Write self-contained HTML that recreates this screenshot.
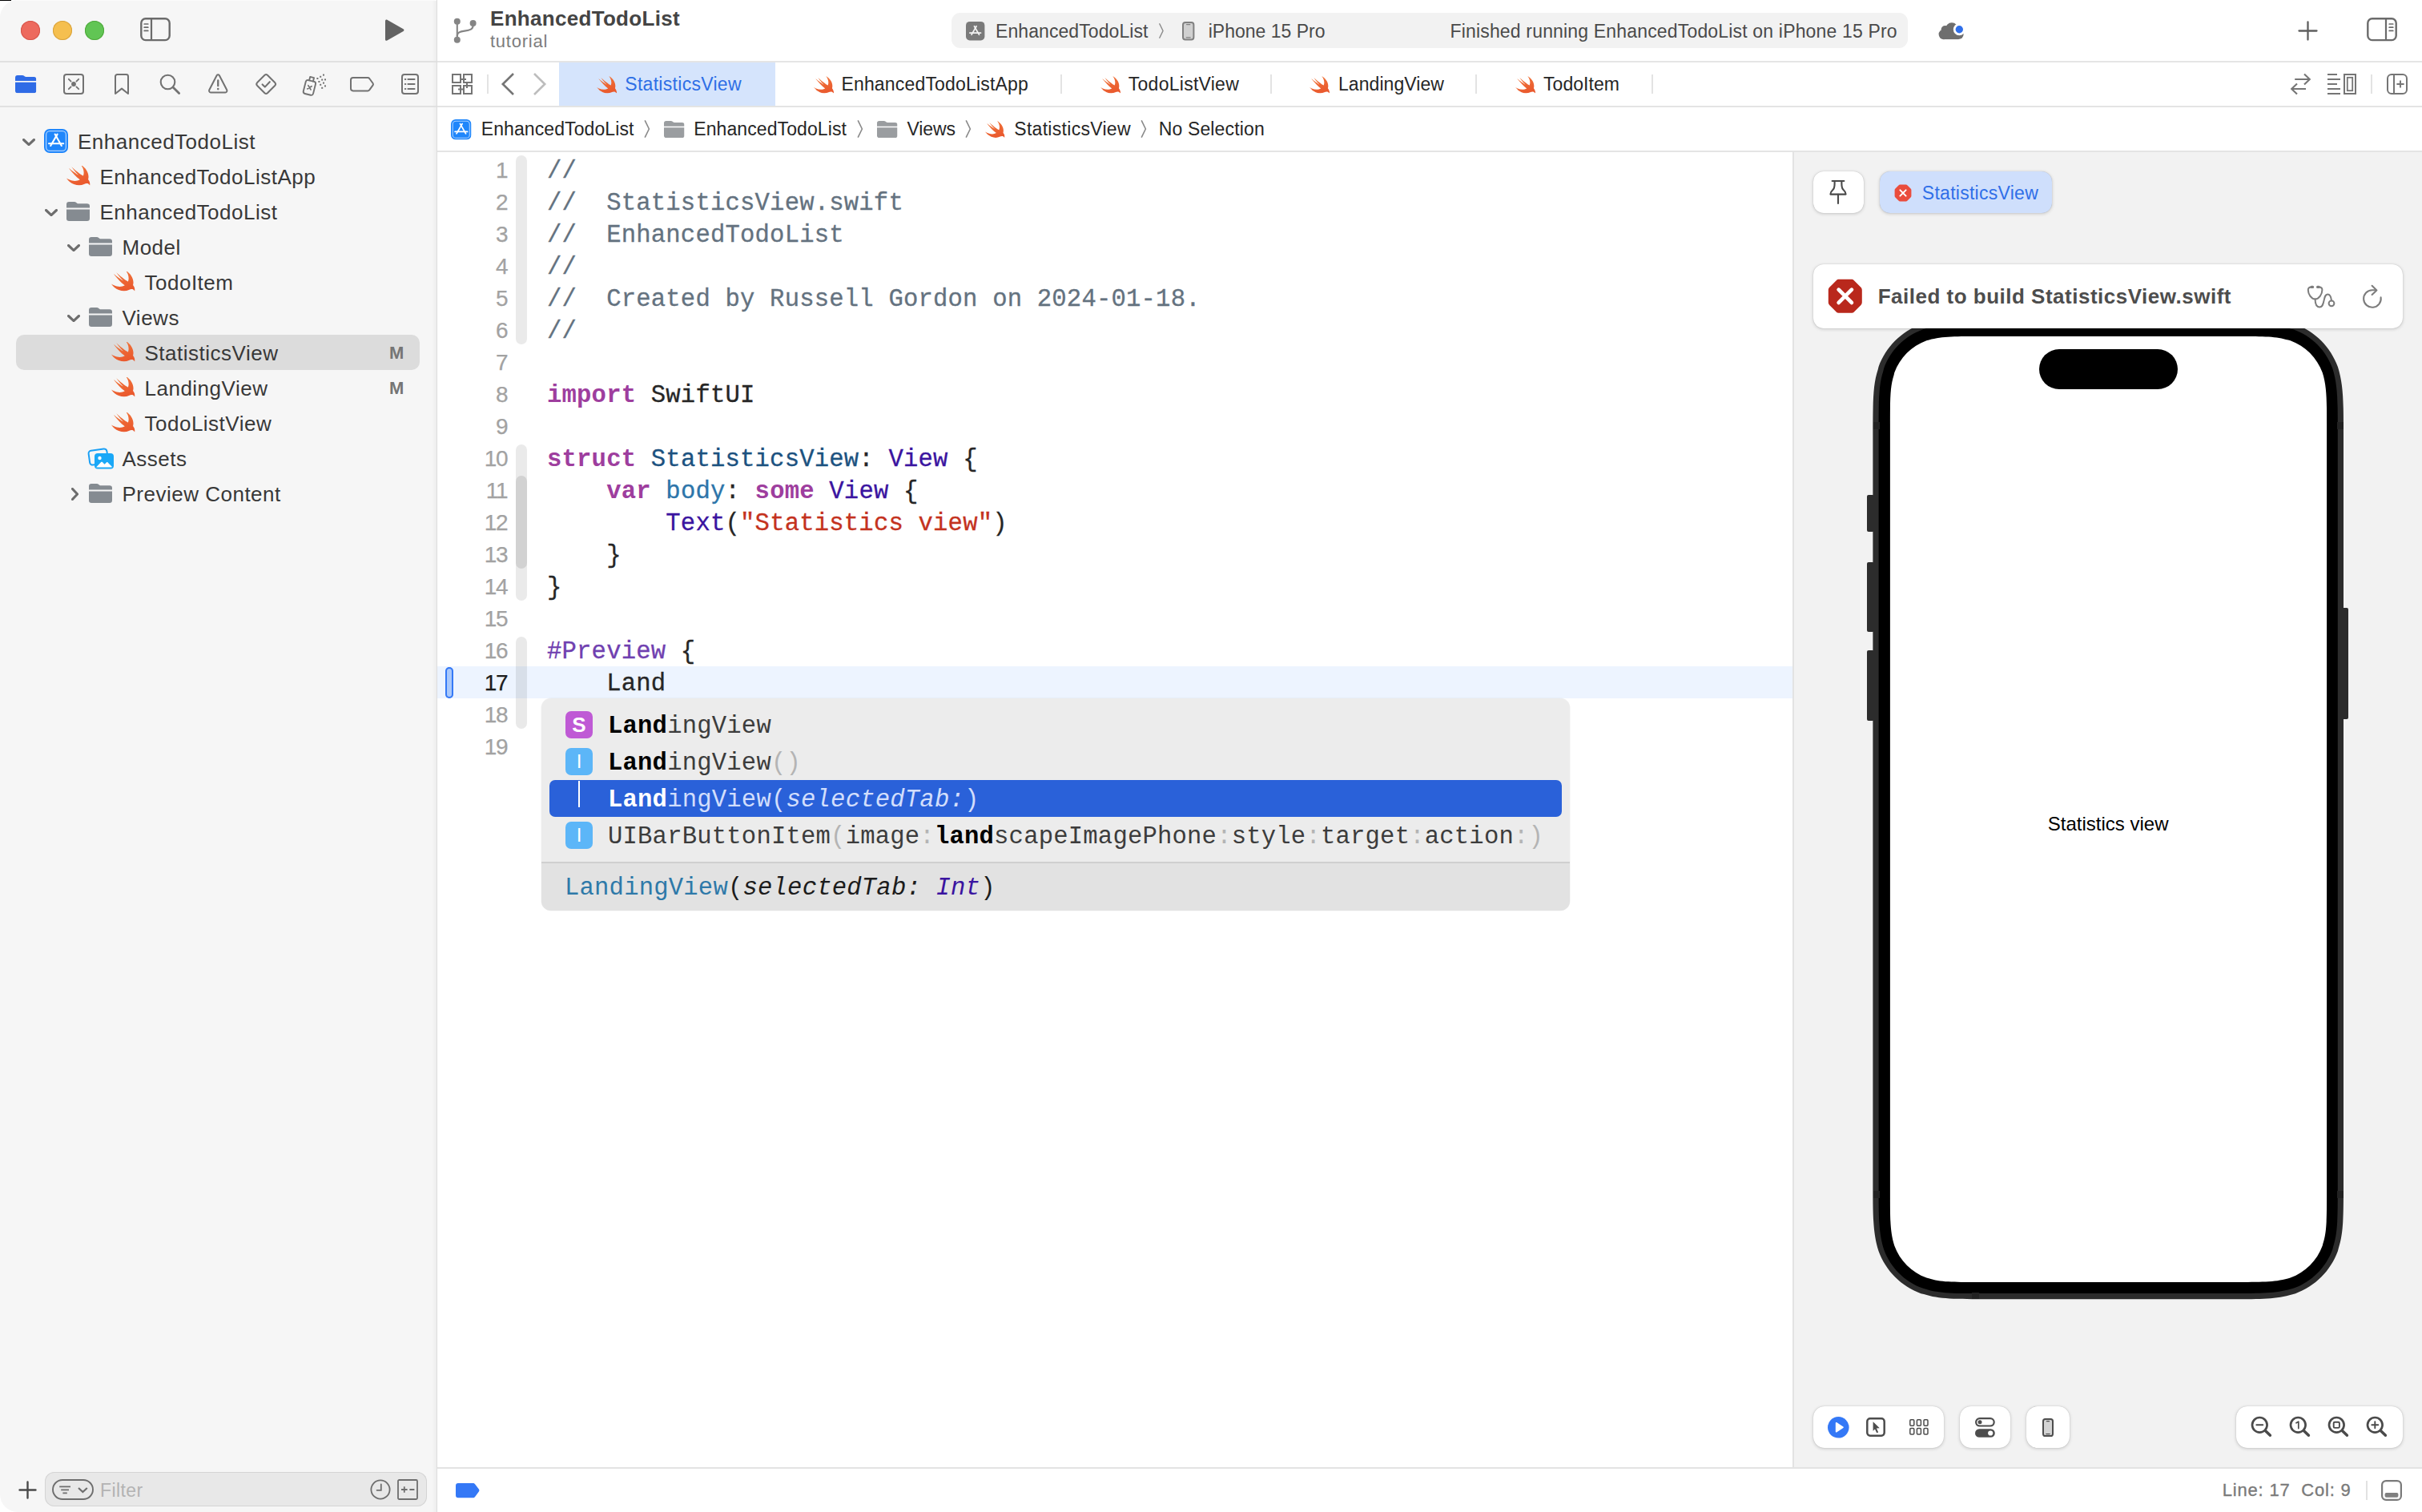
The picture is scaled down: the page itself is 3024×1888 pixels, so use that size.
<!DOCTYPE html>
<html>
<head>
<meta charset="utf-8">
<title>Xcode</title>
<style>
html,body{margin:0;padding:0;}
body{width:3024px;height:1888px;overflow:hidden;background:#fff;position:relative;font-family:"Liberation Sans",sans-serif;color:#262626;}
.abs{position:absolute;}
svg{position:absolute;overflow:visible;}
.t{position:absolute;white-space:pre;line-height:1;}
/* sidebar */
#sidebar{left:0;top:0;width:545px;height:1888px;background:#f6f6f6;border-radius:22px 0 0 22px;}
#sideborder{left:545px;top:0;width:1px;height:1888px;background:#dddddd;}
.hline{position:absolute;height:2px;background:#e1e1e1;}
.nav{position:absolute;font-size:26px;letter-spacing:.5px;color:#383838;white-space:pre;line-height:30px;height:30px;}
.badge{position:absolute;font-size:22px;font-weight:700;color:#757575;line-height:30px;}
/* tabs */
.tab{position:absolute;font-size:23px;letter-spacing:.25px;color:#262626;white-space:pre;line-height:28px;}
.crumb{position:absolute;font-size:23px;letter-spacing:.2px;color:#262626;white-space:pre;line-height:28px;top:147px;}
.tabsep{position:absolute;top:93px;width:2px;height:24px;background:#e3e3e3;}
/* code */
.ln{position:absolute;right:2390.7px;font-size:28px;letter-spacing:-1.3px;color:#a2a2a2;-webkit-text-stroke:.25px;line-height:40px;height:40px;white-space:pre;}
.code{position:absolute;left:683px;-webkit-text-stroke:.3px;font-family:"Liberation Mono",monospace;font-size:30.6px;letter-spacing:.18px;line-height:40px;height:40px;white-space:pre;color:#262626;}
.cm{color:#64727f;}
.kw{color:#9e3e9e;font-weight:700;-webkit-text-stroke:0;}
.ty{color:#1c5280;}
.cl{color:#3a14a0;}
.pr{color:#2d75aa;}
.st{color:#c4321e;}
.mc{color:#7040b0;}
.rib{position:absolute;left:644px;width:14px;border-radius:7px;background:#eaeaea;}
/* popup */
.pop{position:absolute;font-family:"Liberation Mono",monospace;font-size:30.6px;letter-spacing:.18px;line-height:40px;white-space:pre;color:#3c3c3c;}
.pop b{color:#000;}
.pop .g{color:#b4b4b4;}
.kind{position:absolute;left:706px;width:34px;height:34px;border-radius:7px;color:#fff;font-size:26px;font-weight:700;text-align:center;line-height:34px;}
.card{position:absolute;background:#fff;border-radius:11px;box-shadow:0 1px 4px rgba(0,0,0,.18),0 0 1px rgba(0,0,0,.25);}
</style>
</head>
<body>
<svg width="0" height="0" style="position:absolute">
<defs>
<linearGradient id="swg" x1="0" y1="0" x2="0.4" y2="1"><stop offset="0" stop-color="#f27a3c"/><stop offset="1" stop-color="#ea5a2e"/></linearGradient>
<symbol id="swift" viewBox="2.41 3.41 18.12 16.21" preserveAspectRatio="none"><path fill="url(#swg)" d="M13.543 3.41c4.114 2.47 6.545 7.162 5.549 11.131-.024.093-.05.181-.076.272l.002.001c2.062 2.538 1.5 5.258 1.236 4.745-1.072-2.086-3.066-1.568-4.088-1.043a6.803 6.803 0 0 1-.281.158l-.02.012-.002.002c-2.115 1.123-4.957 1.205-7.812-.022a12.568 12.568 0 0 1-5.64-4.838c.649.48 1.35.902 2.097 1.252 3.019 1.414 6.051 1.311 8.197-.002C9.651 12.73 7.101 9.67 5.146 7.191a10.628 10.628 0 0 1-1.005-1.384c2.34 2.142 6.038 4.83 7.365 5.576C8.69 8.408 6.208 4.743 6.324 4.86c4.436 4.47 8.528 6.996 8.528 6.996.154.085.27.154.36.213.085-.215.16-.437.224-.668.708-2.588-.09-5.548-1.893-7.992z"/></symbol>
<symbol id="folder" viewBox="0 0 29 24" preserveAspectRatio="none"><path d="M0 3.2A3.2 3.2 0 0 1 3.2 0h6.6c1 0 1.7.3 2.4.9l1 .8c.5.4 1 .5 1.6.5H25.8A3.2 3.2 0 0 1 29 5.4V7.6H0z"/><path d="M0 9.4H29V20.8A3.2 3.2 0 0 1 25.8 24H3.2A3.2 3.2 0 0 1 0 20.8z"/></symbol>
<symbol id="chd" viewBox="0 0 16 9"><path d="M1.5 1.5L8 7.6L14.5 1.5" fill="none" stroke="#6d6d6d" stroke-width="3.1" stroke-linecap="round" stroke-linejoin="round"/></symbol>
<symbol id="chr" viewBox="0 0 9 16"><path d="M1.5 1.5L7.6 8L1.5 14.5" fill="none" stroke="#6d6d6d" stroke-width="3.1" stroke-linecap="round" stroke-linejoin="round"/></symbol>
<symbol id="bc" viewBox="0 0 8 24"><path d="M1.2 1L6.6 12L1.2 23" fill="none" stroke="#8a8a8a" stroke-width="1.8" stroke-linecap="round" stroke-linejoin="round"/></symbol>
<symbol id="proj" viewBox="0 0 30 30"><rect width="30" height="30" rx="7" fill="#1f86fb"/><rect x="2.6" y="2.6" width="24.8" height="24.8" rx="4.6" fill="none" stroke="#a9d0ff" stroke-width="1.3"/><g fill="none" stroke="#fff" stroke-width="2.1" stroke-linecap="round"><path d="M16.6 6.6L8.2 21"/><path d="M13.6 6.6L21.8 21"/><path d="M6 18.2H24.2"/></g></symbol>
</defs>
</svg>

<!-- ===== SIDEBAR ===== -->
<div class="abs" style="left:0;top:0;width:14px;height:1px;background:#000"></div>
<div id="sidebar" class="abs"></div>
<div class="abs" style="left:539px;top:0;width:6px;height:1888px;background:linear-gradient(to right,rgba(0,0,0,0),rgba(0,0,0,.035))"></div>
<div class="abs" style="left:20px;top:0;width:525px;height:1px;background:#fbfbfb"></div>
<div id="sideborder" class="abs"></div>
<div class="abs" style="left:26px;top:26px;width:24px;height:24px;border-radius:50%;background:#ed6a5e;box-shadow:inset 0 0 0 1px #d6554b"></div>
<div class="abs" style="left:66px;top:26px;width:24px;height:24px;border-radius:50%;background:#f5bf4f;box-shadow:inset 0 0 0 1px #d8a23d"></div>
<div class="abs" style="left:106px;top:26px;width:24px;height:24px;border-radius:50%;background:#61c554;box-shadow:inset 0 0 0 1px #4fa83c"></div>
<svg style="left:175px;top:22px" width="38" height="30" viewBox="0 0 38 30"><rect x="1.3" y="1.3" width="35.4" height="26.8" rx="5.5" fill="none" stroke="#6b6b6b" stroke-width="2.4"/><path d="M14 1.5V28" stroke="#6b6b6b" stroke-width="2.2"/><path d="M5.2 8H9.8M5.2 12.2H9.8M5.2 16.4H9.8" stroke="#6b6b6b" stroke-width="1.7" stroke-linecap="round"/></svg>
<svg style="left:479px;top:23px" width="27" height="30" viewBox="0 0 27 30"><path d="M2 3.2C2 1.9 3.3 1.2 4.4 1.8L24.6 13.3C25.7 13.9 25.7 15.5 24.6 16.1L4.4 27.6C3.3 28.2 2 27.5 2 26.2Z" fill="#636363"/></svg>
<div class="hline" style="left:0;top:76px;width:545px"></div>
<div class="hline" style="left:0;top:132px;width:545px"></div>
<div class="abs" style="left:20px;top:418px;width:504px;height:44px;border-radius:10px;background:#dcdcdc"></div>
<svg style="left:28px;top:172.5px" width="16" height="9"><use href="#chd"/></svg>
<svg style="left:54.5px;top:161.0px" width="30" height="30"><use href="#proj"/></svg>
<div class="nav" style="left:97px;top:162.0px">EnhancedTodoList</div>
<svg style="left:83.0px;top:206.0px" width="29.5" height="25.5"><use href="#swift"/></svg>
<div class="nav" style="left:124.5px;top:206.0px">EnhancedTodoListApp</div>
<svg style="left:55.5px;top:260.5px" width="16" height="9"><use href="#chd"/></svg>
<svg style="left:83.0px;top:252.0px" width="29" height="24" fill="#858b91"><use href="#folder"/></svg>
<div class="nav" style="left:124.5px;top:250.0px">EnhancedTodoList</div>
<svg style="left:83.5px;top:304.5px" width="16" height="9"><use href="#chd"/></svg>
<svg style="left:111.0px;top:296.0px" width="29" height="24" fill="#858b91"><use href="#folder"/></svg>
<div class="nav" style="left:152.5px;top:294.0px">Model</div>
<svg style="left:139.0px;top:338.0px" width="29.5" height="25.5"><use href="#swift"/></svg>
<div class="nav" style="left:180.5px;top:338.0px">TodoItem</div>
<svg style="left:83.5px;top:392.5px" width="16" height="9"><use href="#chd"/></svg>
<svg style="left:111.0px;top:384.0px" width="29" height="24" fill="#858b91"><use href="#folder"/></svg>
<div class="nav" style="left:152.5px;top:382.0px">Views</div>
<svg style="left:139.0px;top:426.0px" width="29.5" height="25.5"><use href="#swift"/></svg>
<div class="nav" style="left:180.5px;top:426.0px">StatisticsView</div>
<div class="badge" style="left:486px;top:426.0px">M</div>
<svg style="left:139.0px;top:470.0px" width="29.5" height="25.5"><use href="#swift"/></svg>
<div class="nav" style="left:180.5px;top:470.0px">LandingView</div>
<div class="badge" style="left:486px;top:470.0px">M</div>
<svg style="left:139.0px;top:514.0px" width="29.5" height="25.5"><use href="#swift"/></svg>
<div class="nav" style="left:180.5px;top:514.0px">TodoListView</div>
<svg style="left:109.5px;top:558.5px" width="33" height="28" viewBox="0 0 33 28"><rect x="1.2" y="2.6" width="23" height="18" rx="3.5" transform="rotate(-8 12 11)" fill="#f6f6f6" stroke="#1aa0f5" stroke-width="2"/><rect x="8" y="7" width="24" height="19.5" rx="4" fill="#1aa8f7"/><circle cx="14.5" cy="13" r="2.2" fill="#fff"/><path d="M10 24.5l6.2-6.4c.5-.5 1.2-.5 1.7 0l2.6 2.7 2.4-2.4c.5-.5 1.2-.5 1.7 0l5.4 5.6c-.4.5-1 .5-2 .5H12c-1 0-1.600-.0-2-.5z" fill="#fff"/></svg>
<div class="nav" style="left:152.5px;top:558.0px">Assets</div>
<svg style="left:88.5px;top:608.5px" width="9" height="16"><use href="#chr"/></svg>
<svg style="left:111.0px;top:604.0px" width="29" height="24" fill="#858b91"><use href="#folder"/></svg>
<div class="nav" style="left:152.5px;top:602.0px">Preview Content</div>
<svg style="left:18.8px;top:93.9px" width="26.3" height="22.2" fill="#2f6be6"><use href="#folder"/></svg>
<g></g>
<svg style="left:79px;top:92px" width="26" height="26" viewBox="0 0 26 26" fill="none" stroke="#727272" stroke-width="2" stroke-linecap="round"><rect x="1" y="1" width="24" height="24" rx="3"/><path d="M6.8 6.8L9.6 9.6M19.2 6.8L16.4 9.6M6.8 19.2L9.6 16.4M19.2 19.2L16.4 16.4" stroke-width="1.8"/><circle cx="13" cy="13" r="2.9" fill="#727272" stroke="none"/></svg>
<svg style="left:143px;top:92px" width="18" height="26" viewBox="0 0 18 26" fill="none" stroke="#727272" stroke-width="2" stroke-linejoin="round"><path d="M1 3.4A2.4 2.4 0 0 1 3.4 1H14.6A2.4 2.4 0 0 1 17 3.4V25L9 18.600L1 25Z"/></svg>
<svg style="left:199px;top:92px" width="27" height="27" viewBox="0 0 27 27" fill="none" stroke="#727272" stroke-linecap="round"><circle cx="10.5" cy="10.500" r="8.8" stroke-width="2.100"/><path d="M17 17L24.600 24.600" stroke-width="2.800"/></svg>
<svg style="left:260px;top:91.500px" width="24.500" height="24.500" viewBox="0 0 24.5 24.5" fill="none" stroke="#727272" stroke-width="2" stroke-linejoin="round" stroke-linecap="round"><path d="M10.600 2.200C11.400 .9 13.100 .9 13.900 2.200L23.200 20.300C23.900 21.700 23 23.400 21.400 23.400H3.100C1.500 23.400 .6 21.700 1.300 20.300Z"/><path d="M12.250 8.500V15.200" stroke-width="2.300"/><circle cx="12.250" cy="19.100" r="1.300" fill="#727272" stroke="none"/></svg>
<svg style="left:319px;top:92px" width="26.400" height="26" viewBox="0 0 26.4 26" fill="none" stroke="#727272" stroke-width="2" stroke-linejoin="round" stroke-linecap="round"><path d="M11.500 1.800C12.500 .9 13.900 .9 14.900 1.800L24.400 11.300C25.300 12.300 25.300 13.700 24.400 14.700L14.900 24.200C13.900 25.100 12.500 25.100 11.500 24.200L2 14.700C1.100 13.700 1.100 12.300 2 11.300Z"/><path d="M8.600 13.400L11.800 16.600L17.800 10.200" stroke-width="2.100"/></svg>
<svg style="left:377px;top:91px" width="31" height="29" viewBox="0 0 31 29" fill="none" stroke="#727272" stroke-width="1.900" stroke-linejoin="round" stroke-linecap="round"><g transform="rotate(14 9 18)"><rect x="3.200" y="9.600" width="12.600" height="17.400" rx="2.600"/><path d="M7 9.600V5H12V9.600"/><path d="M7.300 16L11.700 20.400M11.700 16L7.300 20.400" stroke-width="1.700"/></g><g fill="#727272" stroke="none"><rect x="26" y="1.600" width="2" height="2"/><rect x="22.200" y="3.800" width="2" height="2"/><rect x="18.400" y="6" width="2" height="2"/><rect x="24.200" y="7.600" width="2" height="2"/><rect x="28" y="7.400" width="2" height="2"/><rect x="20.400" y="10" width="2" height="2"/><rect x="26" y="11.600" width="2" height="2"/><rect x="22.200" y="13.800" width="2" height="2"/><rect x="28" y="15.400" width="2" height="2"/><rect x="24.200" y="17.800" width="2" height="2"/></g></svg>
<svg style="left:437px;top:95.800px" width="30" height="18.400" viewBox="0 0 30 18.400" fill="none" stroke="#727272" stroke-width="2" stroke-linejoin="round"><path d="M3.800 1H22.200C23 1 23.700 1.400 24.200 2L28.600 8C29.100 8.700 29.100 9.600 28.600 10.300L24.200 16.400C23.700 17 23 17.400 22.200 17.400H3.800A2.800 2.800 0 0 1 1 14.600V3.800A2.800 2.800 0 0 1 3.800 1Z"/></svg>
<svg style="left:501px;top:92px" width="22" height="26" viewBox="0 0 22 26" fill="none" stroke="#727272" stroke-width="2" stroke-linecap="round"><rect x="1" y="1" width="20" height="24" rx="3"/><path d="M8.400 7H16.600M8.400 13H16.600M8.400 19H16.600" stroke-width="1.900"/><path d="M4.800 7H5.400M4.800 13H5.400M4.800 19H5.400" stroke-width="1.900"/></svg>

<svg style="left:22px;top:1848px" width="25" height="25" viewBox="0 0 25 25" fill="none" stroke="#4a4a4a" stroke-width="2.400" stroke-linecap="round"><path d="M12.500 2.500V22.500M2.500 12.500H22.500"/></svg>
<div class="abs" style="left:56px;top:1838px;width:477px;height:43px;border-radius:12px;background:#e8e8e8;box-shadow:inset 0 0 0 1px #d4d4d4"></div>
<svg style="left:65px;top:1847px" width="52" height="26" viewBox="0 0 52 26" fill="none" stroke="#6e6e6e" stroke-width="1.900" stroke-linecap="butt"><rect x="1" y="1" width="50" height="24" rx="12"/><path d="M9.200 9.400H23M11.200 13.400H21M13.400 17.400H18.800" stroke-width="1.800"/><path d="M33 11L38.400 16L43.800 11" stroke-width="2.200"/></svg>
<div class="t" style="left:125px;top:1847px;font-size:23px;line-height:28px;color:#b3b3b3;letter-spacing:.4px">Filter</div>
<svg style="left:462px;top:1847px" width="26" height="26" viewBox="0 0 26 26" fill="none" stroke="#6e6e6e" stroke-width="1.800" stroke-linecap="round"><circle cx="13" cy="13" r="11.600"/><path d="M13.800 6.400V13.800H8.600"/></svg>
<svg style="left:496px;top:1847px" width="26" height="26" viewBox="0 0 26 26" fill="none" stroke="#6e6e6e" stroke-width="1.800" stroke-linecap="butt"><rect x="1" y="1" width="24" height="24" rx="1.500"/><path d="M5 13H12.600M8.800 9.200V16.800M15.400 13H21.400"/></svg>


<!-- ===== TOOLBAR ===== -->
<div class="hline" style="left:546px;top:76px;width:2478px;background:#e5e5e5"></div>
<svg style="left:565px;top:21px" width="32" height="34" viewBox="0 0 32 34" fill="none" stroke="#858585" stroke-width="2.100" stroke-linecap="round"><path d="M5.800 6V29"/><path d="M25.600 8V11C25.600 15.500 22 16.600 15 17.600C9.500 18.400 5.800 19.500 5.800 24"/><g fill="#858585" stroke="none"><circle cx="5.800" cy="5.800" r="4"/><circle cx="25.600" cy="8" r="4"/><circle cx="5.800" cy="28.800" r="4"/></g></svg>
<div class="t" style="left:612px;top:8.400px;font-size:26px;line-height:30px;font-weight:700;letter-spacing:.3px;color:#444">EnhancedTodoList</div>
<div class="t" style="left:612px;top:39.200px;font-size:22px;line-height:26px;letter-spacing:.75px;color:#7d7d7d">tutorial</div>
<div class="abs" style="left:1188px;top:16px;width:1194px;height:44px;border-radius:11px;background:#f2f2f2"></div>
<svg style="left:1205.800px;top:26.600px" width="23.400" height="23.400" viewBox="0 0 30 30"><rect width="30" height="30" rx="6" fill="#7a7a7a"/><g fill="none" stroke="#f2f2f2" stroke-width="2.200" stroke-linecap="round"><path d="M16.800 7.400L9 21"/><path d="M13.400 7.400L21.200 21"/><path d="M6.200 18H23.800"/></g></svg>
<div class="tab" style="left:1243px;top:24.600px;letter-spacing:.08px;color:#4a4a4a">EnhancedTodoList</div>
<svg style="left:1446px;top:29px" width="8" height="19"><use href="#bc"/></svg>
<svg style="left:1476px;top:26.600px" width="15.400" height="23.400" viewBox="0 0 15.400 23.400"><rect x="1" y="1" width="13.400" height="21.400" rx="3" fill="#d0d0d0" stroke="#808080" stroke-width="2"/><path d="M5.600 3.600H9.800M5.200 19.800H10.200" stroke="#808080" stroke-width="1.300" stroke-linecap="round"/></svg>
<div class="tab" style="left:1508.700px;top:24.600px;letter-spacing:0;color:#4a4a4a">iPhone 15 Pro</div>
<div class="tab" style="left:1810.500px;top:24.600px;letter-spacing:.17px;color:#4a4a4a">Finished running EnhancedTodoList on iPhone 15 Pro</div>
<svg style="left:2419px;top:24px" width="36" height="28" viewBox="0 0 36 28"><g fill="#6e6e6e"><circle cx="7.800" cy="19" r="6.200"/><circle cx="9.600" cy="13" r="5"/><circle cx="17.900" cy="12.300" r="8"/><circle cx="26.400" cy="18.900" r="6.200"/><rect x="7.800" y="13" width="18.600" height="12.100"/></g><circle cx="27.300" cy="12.700" r="7.500" fill="#fff"/><circle cx="27.300" cy="12.700" r="4.700" fill="#2f6fea"/></svg>
<svg style="left:2869px;top:26px" width="25" height="25" viewBox="0 0 25 25" fill="none" stroke="#5f5f5f" stroke-width="2.300" stroke-linecap="round"><path d="M12.500 1.500V23.500M1.500 12.500H23.500"/></svg>
<svg style="left:2955px;top:22px" width="38" height="30" viewBox="0 0 38 30"><rect x="1.300" y="1.300" width="35.400" height="26.800" rx="5.500" fill="none" stroke="#6b6b6b" stroke-width="2.400"/><path d="M24 1.500V28" stroke="#6b6b6b" stroke-width="2.200"/><path d="M28.200 8H32.800M28.200 12.200H32.800M28.200 16.400H32.800" stroke="#6b6b6b" stroke-width="1.700" stroke-linecap="round"/></svg>

<!-- ===== TABS ===== -->
<div class="abs" style="left:698px;top:78px;width:270px;height:54px;background:#d5e4fc"></div>
<div class="hline" style="left:546px;top:132px;width:2478px;background:#e4e4e4"></div>
<div class="hline" style="left:546px;top:188px;width:2478px;background:#e4e4e4"></div>
<svg style="left:564px;top:92px" width="26" height="26" viewBox="0 0 26 26" fill="none" stroke="#757575" stroke-width="2"><rect x="1" y="1" width="10" height="10"/><rect x="15" y="1" width="10" height="10"/><rect x="1" y="15" width="10" height="10"/><rect x="15" y="15" width="10" height="10"/><path d="M11 7H18M19 11V18M8 19.600H15"/></svg>
<div class="tabsep" style="left:608px"></div>
<svg style="left:625px;top:90px" width="18" height="30" viewBox="0 0 18 30" fill="none" stroke="#757575" stroke-width="2.600" stroke-linecap="butt" stroke-linejoin="miter"><path d="M16 2L2.800 15L16 28"/></svg>
<svg style="left:665px;top:90px" width="18" height="30" viewBox="0 0 18 30" fill="none" stroke="#bdbdbd" stroke-width="2.600" stroke-linecap="butt" stroke-linejoin="miter"><path d="M2 2L15.200 15L2 28"/></svg>
<svg style="left:745px;top:94.500px" width="25" height="21.500"><use href="#swift"/></svg>
<div class="tab" style="left:780.300px;top:91.400px;letter-spacing:.29px;color:#2e6fe6">StatisticsView</div>
<svg style="left:1015.500px;top:94.500px" width="25" height="21.500"><use href="#swift"/></svg>
<div class="tab" style="left:1050.400px;top:91.400px;letter-spacing:.18px">EnhancedTodoListApp</div>
<div class="tabsep" style="left:1324px"></div>
<svg style="left:1373.500px;top:94.500px" width="25" height="21.500"><use href="#swift"/></svg>
<div class="tab" style="left:1408.800px;top:91.400px;letter-spacing:.26px">TodoListView</div>
<div class="tabsep" style="left:1586px"></div>
<svg style="left:1635px;top:94.500px" width="25" height="21.500"><use href="#swift"/></svg>
<div class="tab" style="left:1671px;top:91.400px;letter-spacing:.06px">LandingView</div>
<div class="tabsep" style="left:1842px"></div>
<svg style="left:1891.500px;top:94.500px" width="25" height="21.500"><use href="#swift"/></svg>
<div class="tab" style="left:1927px;top:91.400px;letter-spacing:.05px">TodoItem</div>
<div class="tabsep" style="left:2062px"></div>
<svg style="left:2859px;top:91px" width="27" height="28" viewBox="0 0 27 28" fill="none" stroke="#757575" stroke-width="2.100" stroke-linecap="butt" stroke-linejoin="miter"><path d="M6.200 8H24.600M18 1.400L24.800 8L18 14.600"/><path d="M20 20H2.400M9 13.400L2.200 20L9 26.600"/></svg>
<svg style="left:2906px;top:92px" width="36" height="26" viewBox="0 0 36 26" fill="none" stroke="#757575" stroke-width="2"><path d="M0 1H12M0 7H16M0 13H12M0 19H16M0 25H16"/><rect x="21" y="1" width="14" height="24"/><rect x="24.800" y="4.800" width="6.400" height="16.400" stroke-width="1.800"/></svg>
<div class="tabsep" style="left:2960px"></div>
<svg style="left:2980px;top:92px" width="26" height="26" viewBox="0 0 26 26" fill="none" stroke="#757575" stroke-width="2"><rect x="1" y="1" width="24" height="24" rx="5"/><path d="M9 1V25"/><path d="M12.400 13H21.600M17 8.400V17.600" stroke-width="1.900"/></svg>
<!-- breadcrumb -->
<svg style="left:563px;top:148.500px" width="25.500" height="25.500"><use href="#proj"/></svg>
<div class="crumb" style="left:600.700px;letter-spacing:.1px">EnhancedTodoList</div>
<svg style="left:804px;top:150px" width="8" height="22"><use href="#bc"/></svg>
<svg style="left:829px;top:150.500px" width="25.500" height="21" fill="#9a9da0"><use href="#folder"/></svg>
<div class="crumb" style="left:866.200px;letter-spacing:.1px">EnhancedTodoList</div>
<svg style="left:1069.500px;top:150px" width="8" height="22"><use href="#bc"/></svg>
<svg style="left:1095px;top:150.500px" width="25.500" height="21" fill="#9a9da0"><use href="#folder"/></svg>
<div class="crumb" style="left:1132.500px;letter-spacing:-.1px">Views</div>
<svg style="left:1204.500px;top:150px" width="8" height="22"><use href="#bc"/></svg>
<svg style="left:1230px;top:150.500px" width="24.500" height="21"><use href="#swift"/></svg>
<div class="crumb" style="left:1266.300px;letter-spacing:.29px">StatisticsView</div>
<svg style="left:1424px;top:150px" width="8" height="22"><use href="#bc"/></svg>
<div class="crumb" style="left:1446.700px;letter-spacing:.15px">No Selection</div>

<!-- ===== EDITOR ===== -->
<div class="abs" style="left:546px;top:832px;width:1693px;height:40px;background:#edf4ff"></div>
<div class="abs" style="left:556px;top:832.500px;width:10px;height:39px;border-radius:5px;background:#a9c8fb;box-shadow:inset 0 0 0 2px #3478f6"></div>
<div class="rib" style="top:194.300px;height:235.400px"></div>
<div class="rib" style="top:554.500px;height:195px"></div>
<div class="rib" style="top:594px;height:116px;background:#d2d2d2"></div>
<div class="rib" style="top:794.500px;height:115px;background:rgba(0,0,0,.085)"></div>
<div class="ln" style="top:192.8px">1</div>
<div class="code" style="top:194.4px"><span class="cm">//</span></div>
<div class="ln" style="top:232.8px">2</div>
<div class="code" style="top:234.4px"><span class="cm">//  StatisticsView.swift</span></div>
<div class="ln" style="top:272.8px">3</div>
<div class="code" style="top:274.4px"><span class="cm">//  EnhancedTodoList</span></div>
<div class="ln" style="top:312.8px">4</div>
<div class="code" style="top:314.4px"><span class="cm">//</span></div>
<div class="ln" style="top:352.8px">5</div>
<div class="code" style="top:354.4px"><span class="cm">//  Created by Russell Gordon on 2024-01-18.</span></div>
<div class="ln" style="top:392.8px">6</div>
<div class="code" style="top:394.4px"><span class="cm">//</span></div>
<div class="ln" style="top:432.8px">7</div>
<div class="ln" style="top:472.8px">8</div>
<div class="code" style="top:474.4px"><span class="kw">import</span> SwiftUI</div>
<div class="ln" style="top:512.8px">9</div>
<div class="ln" style="top:552.8px">10</div>
<div class="code" style="top:554.4px"><span class="kw">struct</span> <span class="ty">StatisticsView</span>: <span class="cl">View</span> {</div>
<div class="ln" style="top:592.8px">11</div>
<div class="code" style="top:594.4px">    <span class="kw">var</span> <span class="pr">body</span>: <span class="kw">some</span> <span class="cl">View</span> {</div>
<div class="ln" style="top:632.8px">12</div>
<div class="code" style="top:634.4px">        <span class="cl">Text</span>(<span class="st">"Statistics view"</span>)</div>
<div class="ln" style="top:672.8px">13</div>
<div class="code" style="top:674.4px">    }</div>
<div class="ln" style="top:712.8px">14</div>
<div class="code" style="top:714.4px">}</div>
<div class="ln" style="top:752.8px">15</div>
<div class="ln" style="top:792.8px">16</div>
<div class="code" style="top:794.4px"><span class="mc">#Preview</span> {</div>
<div class="ln" style="top:832.8px;color:#1c1c1c">17</div>
<div class="code" style="top:834.4px">    Land</div>
<div class="ln" style="top:872.8px">18</div>
<div class="ln" style="top:912.8px">19</div>
<div class="abs" style="left:676px;top:872px;width:1284px;height:265px;border-radius:12px;background:#ececec;overflow:hidden;box-shadow:0 0 0 .5px rgba(0,0,0,.06)">
<div class="abs" style="left:0;top:204px;width:1284px;height:2px;background:#cfcfcf"></div>
<div class="abs" style="left:0;top:206px;width:1284px;height:59px;background:#e2e2e2"></div>
<div class="abs" style="left:10px;top:102px;width:1264px;height:46px;border-radius:7px;background:#2a61d9"></div>
<div class="abs" style="left:46px;top:103px;width:2px;height:33px;background:#fff"></div>
</div>
<div class="kind" style="top:888px;background:#bf5ad5">S</div>
<div class="kind" style="top:934px;background:#5cb6f8;font-weight:400;font-size:24px">I</div>
<div class="kind" style="top:1026px;background:#5cb6f8;font-weight:400;font-size:24px">I</div>
<div class="pop" style="left:759px;top:886.500px"><b>Land</b>ingView</div>
<div class="pop" style="left:759px;top:932.500px"><b>Land</b>ingView<span class="g">()</span></div>
<div class="pop" style="left:759px;top:978.500px;color:#d2defc"><b style="color:#fff">Land</b>ingView(<i>selectedTab:</i>)</div>
<div class="pop" style="left:759px;top:1024.500px">UIBarButtonItem<span class="g">(</span>image<span class="g">:</span><b>land</b>scapeImagePhone<span class="g">:</span>style<span class="g">:</span>target<span class="g">:</span>action<span class="g">:)</span></div>
<div class="pop" style="left:705px;top:1088.500px;color:#1c1c1c"><span style="color:#2e79a9">LandingView</span>(<i>selectedTab: <span class="cl">Int</span></i>)</div>


<!-- ===== CANVAS ===== -->
<div class="abs" style="left:2238px;top:190px;width:786px;height:1643px;background:#f2f2f2;border-left:2px solid #e3e3e3;box-sizing:border-box"></div>
<!-- phone -->
<div class="abs" style="left:2331px;top:618px;width:9px;height:46px;border-radius:2px;background:#2c2c2c"></div>
<div class="abs" style="left:2331px;top:702px;width:9px;height:87px;border-radius:2px;background:#2c2c2c"></div>
<div class="abs" style="left:2331px;top:812px;width:9px;height:88px;border-radius:2px;background:#2c2c2c"></div>
<div class="abs" style="left:2924px;top:759px;width:8px;height:139px;border-radius:2px;background:#2c2c2c"></div>
<svg style="left:2330px;top:396px" width="604" height="1230" viewBox="0 0 604 1230"><path d="M153.62 2.00L450.78 2.00C492.59 2.00 513.50 2.00 532.36 8.22L536.01 9.12C560.58 18.06 579.94 37.42 588.88 61.99C596.00 84.50 596.00 105.41 596.00 147.22L596.00 1081.08C596.00 1122.89 596.00 1143.80 589.78 1162.66L588.88 1166.31C579.94 1190.88 560.58 1210.24 536.01 1219.18C513.50 1226.30 492.59 1226.30 450.78 1226.30L153.62 1226.30C111.81 1226.30 90.90 1226.30 72.04 1220.08L68.39 1219.18C43.82 1210.24 24.46 1190.88 15.52 1166.31C8.40 1143.80 8.40 1122.89 8.40 1081.08L8.40 147.22C8.40 105.41 8.40 84.50 14.62 65.64L15.52 61.99C24.46 37.42 43.82 18.06 68.39 9.12C90.90 2.00 111.81 2.00 153.62 2.00Z" fill="#2c2c2c"/><path d="M148.59 9.10L455.81 9.10C494.10 9.10 513.25 9.10 530.52 14.80L533.86 15.62C556.36 23.81 574.09 41.54 582.28 64.04C588.80 84.65 588.80 103.80 588.80 142.09L588.80 1086.11C588.80 1124.40 588.80 1143.55 583.10 1160.82L582.28 1164.16C574.09 1186.66 556.36 1204.39 533.86 1212.58C513.25 1219.10 494.10 1219.10 455.81 1219.10L148.59 1219.10C110.30 1219.10 91.15 1219.10 73.88 1213.40L70.54 1212.58C48.04 1204.39 30.31 1186.66 22.12 1164.16C15.60 1143.55 15.60 1124.40 15.60 1086.11L15.60 142.09C15.60 103.80 15.60 84.65 21.30 67.38L22.12 64.04C30.31 41.54 48.04 23.81 70.54 15.62C91.15 9.10 110.30 9.10 148.59 9.10Z" fill="#000"/><path d="M139.96 23.90L465.04 23.90C496.73 23.90 512.57 23.90 526.86 28.62L529.63 29.29C548.26 36.07 562.93 50.74 569.71 69.37C575.10 86.43 575.10 102.27 575.10 133.96L575.10 1094.94C575.10 1126.63 575.10 1142.47 570.38 1156.76L569.71 1159.53C562.93 1178.16 548.26 1192.83 529.63 1199.61C512.57 1205.00 496.73 1205.00 465.04 1205.00L139.96 1205.00C108.27 1205.00 92.43 1205.00 78.14 1200.28L75.37 1199.61C56.74 1192.83 42.07 1178.16 35.29 1159.53C29.90 1142.47 29.90 1126.63 29.90 1094.94L29.90 133.96C29.90 102.27 29.90 86.43 34.62 72.14L35.29 69.37C42.07 50.74 56.74 36.07 75.37 29.29C92.43 23.90 108.27 23.90 139.96 23.90Z" fill="#fff"/></svg>
<div class="abs" style="left:2338.500px;top:527px;width:8px;height:9px;background:#222"></div>
<div class="abs" style="left:2918px;top:527px;width:8px;height:9px;background:#222"></div>
<div class="abs" style="left:2338.500px;top:1487px;width:8px;height:9px;background:#222"></div>
<div class="abs" style="left:2918px;top:1487px;width:8px;height:9px;background:#222"></div>
<div class="abs" style="left:2462px;top:1614px;width:9px;height:8.400px;background:#222"></div>
<div class="abs" style="left:2545.600px;top:435.600px;width:173.600px;height:50.400px;border-radius:25.200px;background:#000"></div>
<div class="t" style="left:2556.800px;top:1014.600px;font-size:24px;line-height:28px;color:#000">Statistics view</div>
<!-- pin + chip -->
<div class="card" style="left:2264px;top:213.600px;width:63.400px;height:52.700px;border-radius:13px"></div>
<svg style="left:2283px;top:224px" width="24" height="32" viewBox="0 0 24 32" fill="none" stroke="#4a4a4a" stroke-width="2.100" stroke-linecap="round" stroke-linejoin="round"><path d="M4.600 2H19.400"/><path d="M7.600 2.400C7.600 7.500 8.200 10.600 5.200 13.200C3.200 14.900 2.400 16.500 2.400 18.600H21.600C21.600 16.500 20.800 14.900 18.800 13.200C15.800 10.600 16.400 7.500 16.400 2.400"/><path d="M12 18.800V30"/></svg>
<div class="card" style="left:2347px;top:213.600px;width:215px;height:52.700px;border-radius:13px;background:#cfdffc"></div>
<svg style="left:2365px;top:229.500px" width="22" height="22" viewBox="0 0 22 22"><path d="M7.200 .6H14.800C15.400 .6 15.900 .8 16.300 1.200L20.800 5.700C21.200 6.100 21.400 6.600 21.400 7.200V14.800C21.400 15.400 21.200 15.900 20.800 16.300L16.300 20.800C15.900 21.200 15.400 21.400 14.800 21.400H7.200C6.600 21.400 6.100 21.200 5.700 20.800L1.200 16.300C.8 15.900 .6 15.400 .6 14.800V7.200C.6 6.600 .8 6.100 1.200 5.700L5.700 1.200C6.100 .8 6.600 .6 7.200 .6Z" fill="#ea4d3d"/><path d="M7.400 7.400L14.600 14.600M14.600 7.400L7.400 14.600" stroke="#fff" stroke-width="2" stroke-linecap="round"/></svg>
<div class="tab" style="left:2399.800px;top:226.500px;letter-spacing:.27px;color:#2f6fe8">StatisticsView</div>
<!-- banner -->
<div class="card" style="left:2264px;top:330px;width:736px;height:80px;border-radius:13px"></div>
<svg style="left:2282.300px;top:348px" width="43.600" height="43.600" viewBox="0 0 22 22"><path d="M7.200 .4H14.800C15.500 .4 16.100 .6 16.600 1.100L20.900 5.400C21.400 5.900 21.600 6.500 21.600 7.200V14.800C21.600 15.500 21.400 16.100 20.900 16.600L16.600 20.900C16.100 21.400 15.500 21.600 14.800 21.600H7.200C6.500 21.600 5.900 21.400 5.400 20.900L1.100 16.600C.6 16.100 .4 15.500 .4 14.800V7.200C.4 6.500 .6 5.900 1.100 5.400L5.400 1.100C5.900 .6 6.500 .4 7.200 .4Z" fill="#b9281c"/><path d="M6.900 6.900L15.100 15.100M15.100 6.900L6.900 15.100" stroke="#fff" stroke-width="2.400" stroke-linecap="round"/></svg>
<div class="t" style="left:2344.700px;top:355.400px;font-size:26px;line-height:30px;font-weight:700;letter-spacing:.5px;color:#4d4d4d">Failed to build StatisticsView.swift</div>
<svg style="left:2880px;top:355.500px" width="36" height="30" viewBox="0 0 36 30" fill="none" stroke="#7d7d7d" stroke-width="2" stroke-linecap="round" stroke-linejoin="round"><path d="M7.200 2.400H5.400C3 2.400 1.800 4 1.800 6C1.800 11 5.600 17.400 10.600 17.400C15.600 17.400 19.400 11 19.400 6C19.400 4 18.200 2.400 15.800 2.400H14"/><path d="M10.600 17.600C10.600 23.400 12.400 27.400 16 27.400C23.600 27.400 19.800 11.400 26.200 11.400C29.600 11.400 30.600 15.400 31 19.200"/><circle cx="31" cy="22.800" r="3.400"/><path d="M6 2.400H7.600M13.600 2.400H15.200" stroke-width="3.200"/></svg>
<svg style="left:2949px;top:355px" width="26" height="30" viewBox="0 0 26 30" fill="none" stroke="#7d7d7d" stroke-width="2.100" stroke-linecap="round" stroke-linejoin="round"><path d="M23.600 16.400A10.800 10.800 0 1 1 13 7.200H17"/><path d="M12.600 1.800L18.400 7.400L12.600 13"/></svg>
<!-- bottom toolbars -->
<div class="card" style="left:2264px;top:1755.600px;width:163px;height:52.400px;border-radius:14px"></div>
<svg style="left:2281.800px;top:1768.800px" width="26.600" height="26.600" viewBox="0 0 26.600 26.600"><circle cx="13.300" cy="13.300" r="13.300" fill="#3478f6"/><path d="M9.800 7.800C9.800 7.100 10.500 6.700 11.100 7.100L19.400 12.500C19.900 12.900 19.900 13.700 19.400 14.100L11.100 19.500C10.500 19.900 9.800 19.500 9.800 18.800Z" fill="#fff"/></svg>
<svg style="left:2330px;top:1770px" width="24" height="24" viewBox="0 0 24 24"><rect x="1.300" y="1.300" width="21.400" height="21.400" rx="3.600" fill="none" stroke="#4d4d4d" stroke-width="2.500"/><path d="M8.600 5.200L16.800 13.200L12.900 13.500L15.200 18.400L13.200 19.300L11 14.400L8.600 16.800Z" fill="#4d4d4d"/></svg>
<svg style="left:2384px;top:1772.400px" width="24" height="20" viewBox="0 0 24 20" fill="none" stroke="#4d4d4d" stroke-width="1.500"><rect x=".8" y=".8" width="5" height="7.400" rx="1.200"/><rect x="9.400" y=".8" width="5" height="7.400" rx="1.200"/><rect x="18" y=".8" width="5" height="7.400" rx="1.200"/><rect x=".8" y="11.600" width="5" height="7.400" rx="1.200"/><rect x="9.400" y="11.600" width="5" height="7.400" rx="1.200"/><rect x="18" y="11.600" width="5" height="7.400" rx="1.200"/></svg>
<div class="card" style="left:2447px;top:1755.600px;width:63px;height:52.400px;border-radius:14px"></div>
<svg style="left:2466px;top:1770px" width="25" height="25" viewBox="0 0 25 25"><rect x="1.100" y="1.100" width="22.600" height="9.400" rx="4.700" fill="none" stroke="#4d4d4d" stroke-width="2.200"/><circle cx="6" cy="5.800" r="2.500" fill="#4d4d4d"/><rect x="0" y="14.200" width="24.800" height="10.600" rx="5.300" fill="#4d4d4d"/><circle cx="19.200" cy="19.500" r="3.100" fill="#fff"/></svg>
<div class="card" style="left:2530px;top:1755.600px;width:54px;height:52.400px;border-radius:14px"></div>
<svg style="left:2550px;top:1770.800px" width="14" height="23" viewBox="0 0 14 23"><rect x="1" y="1" width="12" height="21" rx="2.600" fill="#d4d4d4" stroke="#4d4d4d" stroke-width="2"/><path d="M5.400 3.600H8.600M4.800 19.600H9.200" stroke="#4d4d4d" stroke-width="1.200" stroke-linecap="round"/></svg>
<div class="card" style="left:2792px;top:1755.600px;width:208px;height:52.600px;border-radius:14px"></div>
<svg style="left:2809px;top:1767px" width="28" height="28" viewBox="0 0 28 28" fill="none" stroke="#4a4a4a" stroke-linecap="round"><circle cx="12.300" cy="12.300" r="9.300" stroke-width="2.700"/><path d="M19.400 19.400L25.400 25.200" stroke-width="3.500"/><path d="M8.300 12.300H16.300" stroke-width="1.900"/></svg>
<svg style="left:2857.200px;top:1767px" width="28" height="28" viewBox="0 0 28 28" fill="none" stroke="#4a4a4a" stroke-linecap="round"><circle cx="12.300" cy="12.300" r="9.300" stroke-width="2.700"/><path d="M19.400 19.400L25.400 25.200" stroke-width="3.500"/><path d="M10 9.800L12.800 8.200V16.600" stroke-width="1.700" stroke-linejoin="round"/></svg>
<svg style="left:2905px;top:1767px" width="28" height="28" viewBox="0 0 28 28" fill="none" stroke="#4a4a4a" stroke-linecap="round"><circle cx="12.300" cy="12.300" r="9.300" stroke-width="2.700"/><path d="M19.400 19.400L25.400 25.200" stroke-width="3.500"/><rect x="8.700" y="8.700" width="7.200" height="7.200" rx="1.400" stroke-width="1.900"/></svg>
<svg style="left:2953.100px;top:1767px" width="28" height="28" viewBox="0 0 28 28" fill="none" stroke="#4a4a4a" stroke-linecap="round"><circle cx="12.300" cy="12.300" r="9.300" stroke-width="2.700"/><path d="M19.400 19.400L25.400 25.200" stroke-width="3.500"/><path d="M8.300 12.300H16.300M12.300 8.300V16.300" stroke-width="1.900"/></svg>

<!-- ===== BOTTOM ===== -->
<div class="hline" style="left:546px;top:1832px;width:2478px;background:#e3e3e3"></div>
<div class="abs" style="left:546px;top:1834px;width:2478px;height:54px;background:#fff"></div>
<svg style="left:568.800px;top:1851.700px" width="30" height="18.200" viewBox="0 0 30 18.200"><path d="M3 0H21.600C22.600 0 23.500 .5 24.100 1.300L28.900 7.600C29.600 8.500 29.600 9.700 28.900 10.600L24.100 16.900C23.500 17.700 22.600 18.200 21.600 18.200H3A3 3 0 0 1 0 15.200V3A3 3 0 0 1 3 0Z" fill="#3478f6"/></svg>
<div class="t" style="left:2774.800px;top:1848.300px;font-size:22px;line-height:26px;letter-spacing:.8px;color:#7a7a7a;-webkit-text-stroke:.35px #7a7a7a">Line: 17  Col: 9</div>
<div class="abs" style="left:2954px;top:1849px;width:2px;height:24px;background:#e2e2e2"></div>
<svg style="left:2973px;top:1848px" width="26" height="26" viewBox="0 0 26 26"><rect x="1.100" y="1.100" width="23.800" height="23.800" rx="5" fill="none" stroke="#7a7a7a" stroke-width="2.200"/><rect x="4.600" y="16" width="16.800" height="5.800" rx="1.800" fill="#808080"/></svg>

</body>
</html>
